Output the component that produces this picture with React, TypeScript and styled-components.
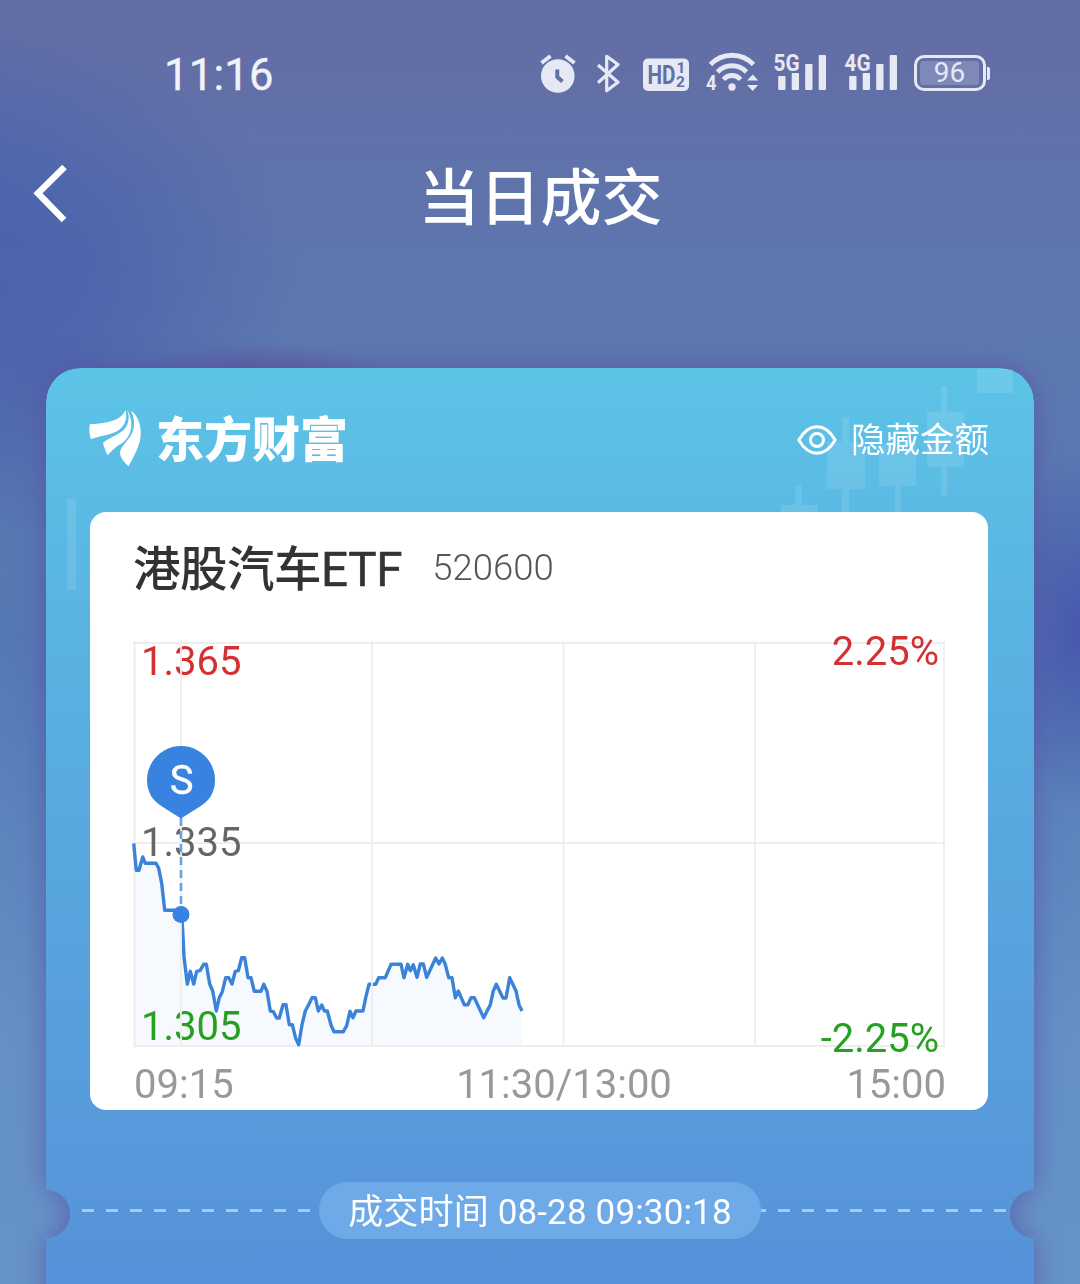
import styled, {createGlobalStyle} from "styled-components";

const GlobalStyle = createGlobalStyle`
    * {
        box-sizing: border-box;
    }

    body {
        margin: 0;
        font-family: Roboto, "Noto Sans CJK SC", sans-serif;
        color: #fff;
    }
`

const pricePoints = "133.7,843.3 136.3,870.3 139,870.3 142.7,857 145.3,863.3 156,863.3 158.7,868.3 161.7,883.3 164.7,910.3 175,910.3 181,914.3 182.3,923 184,956.7 187.3,984 190.3,971.3 193.7,984 196.7,971.3 200,970.7 203.7,964.3 206.3,964.3 209.7,984 212.7,991 216.3,1011 219.3,997.7 222.3,991.7 225.7,977.7 228.7,977.7 232,984 235.3,971.3 238.3,970.7 241.7,957.7 244.7,957.7 248,977.7 251,977.7 254.3,991.3 261,991.3 263.7,984.3 267,991.3 270.3,1011 273.3,1011.7 276.7,1018 279.3,1018 283,1004.7 286,1004.7 289.3,1024.7 292.3,1024.7 295.7,1038.3 298.7,1044.7 302,1024.7 305.3,1011 309,1004 312,997.7 315.3,997.7 318.3,1011 321.7,1005 324.5,1011 327.3,1011 331,1025 334,1031.7 343.3,1031.7 346.7,1025.7 350,1011.3 353,1017.7 356,1011 363,1011 365.7,997.7 369,984.3 375.7,984.3 378.7,977.7 385.3,977.7 391,964.3 401,964.3 404,977.7 407.7,964.3 410.3,970.7 413.3,964.7 417,977.3 420.3,964 423.3,964 426.7,977.3 435.7,958 439,964 442.3,958 445.3,964.3 448.7,977.7 452,977.7 455.3,997.7 458.3,991 464.3,1004.7 468,1004.7 471,997.7 474.3,997.7 483.7,1017.7 490.3,1004.7 493.3,991 496.3,984.3 503,998 506,998 509.7,977.7 516,991 519,1004.7 522,1011";

const gridColumns = [181, 372, 563.5, 755, 944];
const gridRows = [643, 843, 1046];

const AlarmIcon = () => (
    <svg width="38" height="40" viewBox="0 0 38 40">
        <circle cx="17.800" cy="22" r="16.800" fill="#e6e9f3"/>
        <path d="M1.500 9L10.500 2M25.500 2L34.500 9" stroke="#e6e9f3" strokeWidth="4"/>
        <path d="M17.300 15.500v7.500l5.200 4.500" fill="none" stroke="#6270a8" strokeWidth="4"/>
    </svg>
)

const BluetoothIcon = () => (
    <svg width="24" height="40" viewBox="0 0 24 40">
        <path d="M2 11L22 28.300 10.700 36.700V2.300L22 10.500 2 28.700" fill="none" stroke="#e6e9f3" strokeWidth="3.200" strokeLinejoin="round"/>
    </svg>
)

const HdIcon = () => (
    <svg width="46" height="34" viewBox="0 0 46 34">
        <rect y="1.500" width="46" height="32.500" rx="5" fill="#e6e9f3"/>
        <g fill="#6270a8" fontFamily="Roboto" fontWeight="700">
            <text x="4.500" y="26.800" fontSize="25" textLength="28" lengthAdjust="spacingAndGlyphs">HD</text>
            <text x="33.500" y="16.300" fontSize="15.500">1</text>
            <text x="33" y="29.600" fontSize="15.500">2</text>
        </g>
    </svg>
)

const WifiIcon = () => (
    <WideIcon width="54" height="40" viewBox="0 0 54 40">
        <g fill="none" stroke="#e6e9f3" strokeWidth="4.800">
            <path d="M4.500 10.500A29.600 29.600 0 0 1 47.500 10.500"/>
            <path d="M11.500 18A20 20 0 0 1 40.500 18"/>
            <path d="M17.500 25.500A11 11 0 0 1 34.500 25.500"/>
        </g>
        <circle cx="26" cy="33" r="3.700" fill="#e6e9f3"/>
        <path d="M41 26.500L46.700 20.500 52.300 26.500ZM41 31L46.700 37 52.300 31Z" fill="#e6e9f3"/>
        <text x="0" y="36" fontFamily="Roboto" fontWeight="700" fontSize="20.500" textLength="10.500" lengthAdjust="spacingAndGlyphs" fill="#e6e9f3">4</text>
    </WideIcon>
)

const SignalIcon = (props: { network: string }) => (
    <WideIcon width="53" height="40" viewBox="0 0 53 40">
        <text x="-0.500" y="17" fontFamily="Roboto" fontWeight="700" fontSize="24" textLength="26" lengthAdjust="spacingAndGlyphs" fill="#e6e9f3">{props.network}</text>
        <g fill="#e6e9f3">
            <rect x="4.200" y="22" width="7.300" height="14" rx="1"/>
            <rect x="17.700" y="19" width="7.300" height="17" rx="1"/>
            <rect x="31.200" y="10" width="7.300" height="26" rx="1"/>
            <rect x="44.700" y="1" width="7.300" height="35" rx="1"/>
        </g>
    </WideIcon>
)

const BackIcon = () => (
    <svg width="36" height="60" viewBox="0 0 36 60">
        <path d="M32.500 4L6 30.300 32 57" fill="none" stroke="#fff" strokeWidth="6.500"/>
    </svg>
)

const BrandIcon = () => (
    <svg width="54" height="58" viewBox="27 45 162 174">
        <g fill="#fff">
            <path d="M137 47C125 78 85 88 30 90 26 105 28 120 33 136 60 125 95 123 117 108 138 92 141 70 137 47Z"/>
            <path d="M142 47C154 85 138 108 110 122 92 132 78 138 69 146 72 160 77 172 83 184 98 168 105 160 125 148 158 125 162 85 142 47Z"/>
            <path d="M153 50C172 90 160 118 140 142 126 158 120 168 120 180 124 196 134 206 145 217 160 190 180 155 182 125 184 95 175 65 153 50Z"/>
        </g>
    </svg>
)

const EyeIcon = () => (
    <svg width="40" height="32" viewBox="0 0 40 32">
        <g fill="none" stroke="#fff" strokeWidth="3">
            <path d="M1.800 16C7 7 13 2.800 20 2.800S33 7 38.200 16C33 25 27 29.200 20 29.200S7 25 1.800 16Z" strokeLinejoin="round"/>
            <circle cx="20" cy="16" r="6.500"/>
        </g>
    </svg>
)

// faint candlesticks behind the card content
const Candles = () => (
    <CandleLayer viewBox="46 368 988 240">
        <rect x="977" y="369" width="36" height="24"/>
        <path d="M941 386h6v26h17v55h-17v29h-6v-29h-14v-55h14Z"/>
        <path d="M879 443h37v43h-15v30h-6v-30h-16Z"/>
        <path d="M842 418h7v24h16v47h-16v27h-7v-27h-15v-47h15Z"/>
        <path d="M795 485h7v20h16v11h-37v-11h14Z"/>
        <rect x="67" y="499" width="9" height="91"/>
    </CandleLayer>
)

const PriceChart = () => (
    <ChartSvg viewBox="90 620 898 490">
        <polygon points={`133.7,1046 ${pricePoints} 522,1046`} fill="#f6fafe"/>
        <g stroke="#eee" strokeWidth="2">
            <line x1="134.500" x2="134.500" y1="641" y2="1047"/>
            {gridRows.map(y => <line key={y} x1="134" x2="945" y1={y} y2={y}/>)}
        </g>
        <g fontSize="40">
            <text x="141" y="675" fill="#d33131">1.365</text>
            <text x="141" y="855.500" fill="#666">1.335</text>
            <text x="141" y="1040" fill="#25a01f">1.305</text>
            <text x="939" y="665" fill="#d33131" textAnchor="end">2.25%</text>
            <text x="939" y="1052" fill="#25a01f" textAnchor="end">-2.25%</text>
        </g>
        <polyline points={pricePoints} fill="none" stroke="#3b83d9" strokeWidth="3.400" strokeLinejoin="round"/>
        <g stroke="#eee" strokeWidth="1.800">
            {gridColumns.map(x => <line key={x} x1={x} x2={x} y1="641" y2="1047"/>)}
        </g>
        <line x1="181" x2="181" y1="818" y2="908" stroke="#6aa1e4" strokeWidth="2.600" strokeDasharray="8 5"/>
        <circle cx="181" cy="914.500" r="8.500" fill="#3883e0"/>
        <path d="M151 796A34 34 0 1 1 211 796Q207 802 200 806.500L181 818.500 162 806.500Q155 802 151 796Z" fill="#3883e0"/>
        <text x="181.500" y="794" fontSize="40" stroke="#fff" strokeWidth="0.400" textAnchor="middle" fill="#fff">S</text>
        <g fontSize="40" fill="#999">
            <text x="134" y="1098">09:15</text>
            <text x="564" y="1098" textAnchor="middle">11:30/13:00</text>
            <text x="946" y="1098" textAnchor="end">15:00</text>
        </g>
    </ChartSvg>
)

const App = () => {
    return (
        <Screen>
            <GlobalStyle/>
            <StatusBar>
                <Clock>11:16</Clock>
                <StatusIcons>
                    <StatusSlot><AlarmIcon/></StatusSlot>
                    <StatusSlot space={18}><BluetoothIcon/></StatusSlot>
                    <StatusSlot space={23}><HdIcon/></StatusSlot>
                    <StatusSlot space={17}><WifiIcon/></StatusSlot>
                    <StatusSlot space={13.5}><SignalIcon network="5G"/></StatusSlot>
                    <StatusSlot space={18}><SignalIcon network="4G"/></StatusSlot>
                    <StatusSlot space={16.5}><Battery><BatteryLevel>96</BatteryLevel></Battery></StatusSlot>
                </StatusIcons>
            </StatusBar>

            <Header>
                <BackButton aria-label="返回"><BackIcon/></BackButton>
                <Title>当日成交</Title>
            </Header>

            <Card>
                <Candles/>
                <CardHeader>
                    <Brand>
                        <BrandIcon/>
                        <BrandName>东方财富</BrandName>
                    </Brand>
                    <HideAmount>
                        <EyeIcon/>
                        隐藏金额
                    </HideAmount>
                </CardHeader>

                <Panel>
                    <StockRow>
                        <StockName>港股汽车<StockSuffix>ETF</StockSuffix></StockName>
                        <StockCode>520600</StockCode>
                    </StockRow>
                    <PriceChart/>
                </Panel>

                <TimeRow>
                    <Dashes width={237}/>
                    <TimeBadge>成交时间 08-28 09:30:18</TimeBadge>
                    <Dashes width={246} shift={7}/>
                </TimeRow>
            </Card>
        </Screen>
    )
}

export default App;

const Screen = styled.div`
    width: 1080px;
    height: 1284px;
    overflow: hidden;
    background:
        radial-gradient(ellipse 90px 180px at 1080px 630px, #4858ad 0%, rgba(72, 88, 173, 0) 100%),
        radial-gradient(ellipse 140px 46px at 265px 388px, rgba(92, 75, 146, 0.75) 0%, rgba(92, 75, 146, 0) 100%),
        radial-gradient(ellipse 360px 270px at -60px 280px, #4a61ad 0%, rgba(74, 97, 173, 0.75) 45%, rgba(74, 97, 173, 0) 100%),
        linear-gradient(180deg, #626da3 0%, #6270a8 8%, #5f74ac 17%, #5d79b0 27%, #5478b4 50%, #6490c6 80%, #6594c8 100%);
`

const StatusBar = styled.div`
    height: 148px;
    padding: 0 94px 0 164px;
    display: flex;
    justify-content: space-between;
    align-items: center;
`

const Clock = styled.span`
    margin-top: 3px;
    font-weight: 400;
    font-size: 43.500px;
    line-height: 60px;
    letter-spacing: 0.300px;
    -webkit-text-stroke: 0.400px #f1f3f9;
    color: #f1f3f9;
`

const StatusIcons = styled.div`
    display: flex;
    align-items: center;
`

const StatusSlot = styled.span<{ space?: number }>`
    display: flex;
    margin-left: ${props => props.space || 0}px;
`

const WideIcon = styled.svg`
    overflow: visible;
`

const Battery = styled.div`
    width: 72px;
    height: 36px;
    margin-top: -2px;
    padding: 3px 4px 3px 3px;
    border: 3px solid #e6e9f3;
    border-radius: 10px;
    position: relative;

    &::after {
        content: "";
        width: 3px;
        height: 13px;
        background-color: #e6e9f3;
        border-radius: 0 2px 2px 0;
        position: absolute;
        top: 9px;
        right: -7px;
    }
`

const BatteryLevel = styled.div`
    height: 24px;
    display: flex;
    justify-content: center;
    align-items: center;
    font-weight: 400;
    font-size: 28px;
    line-height: 24px;
    color: #e6e9f3;
    background-color: #7d89b8;
    border-radius: 3px;
`

const Header = styled.header`
    height: 220px;
    padding-top: 3px;
    position: relative;
    text-align: center;
`

const BackButton = styled.button`
    padding: 0;
    border: none;
    background: none;
    position: absolute;
    top: 15px;
    left: 32px;
`

const Title = styled.h1`
    margin: 0;
    padding-left: 1px;
    font-weight: 500;
    font-size: 61px;
    line-height: 96px;
`

const Card = styled.main`
    height: 940px;
    margin: 0 46px;
    padding: 0 46px 0 44px;
    position: relative;
    filter: drop-shadow(0 0 14px rgba(88, 70, 158, 0.65));

    &::before {
        content: "";
        position: absolute;
        inset: 0;
        border-radius: 34px 34px 0 0;
        background: linear-gradient(180deg, #5cc4e7 0%, #5bb9e4 17%, #58a8df 50%, #5798da 85%, #558fd8 100%);
        mask:
            radial-gradient(circle at 0 846px, transparent 23.5px, #000 24.5px) left / 50% 100% no-repeat,
            radial-gradient(circle at 100% 846px, transparent 23.5px, #000 24.5px) right / 50% 100% no-repeat;
    }
`

const CandleLayer = styled.svg`
    width: 988px;
    height: 240px;
    fill: rgba(255, 255, 255, 0.1);
    position: absolute;
    top: 0;
    left: 0;
`

const CardHeader = styled.div`
    height: 144px;
    display: flex;
    justify-content: space-between;
    align-items: center;
    position: relative;
`

const Brand = styled.div`
    display: flex;
    align-items: center;
    gap: 13px;
    margin: -5px 0 0 -1px;
`

const BrandName = styled.span`
    margin-top: -3px;
    font-family: "Noto Sans CJK SC", sans-serif;
    font-weight: 900;
    font-size: 48px;
    line-height: 60px;
`

const HideAmount = styled.div`
    display: flex;
    align-items: center;
    gap: 14px;
    margin-right: -1px;
    font-weight: 400;
    font-size: 34.500px;
    line-height: 50px;
`

const Panel = styled.section`
    height: 598px;
    background-color: #fff;
    border-radius: 16px;
    position: relative;
`

const StockRow = styled.div`
    height: 108px;
    padding: 5px 0 0 43px;
    display: flex;
    align-items: center;
    gap: 30px;
`

const StockName = styled.span`
    margin-top: 3px;
    font-weight: 500;
    font-size: 47.500px;
    line-height: 100px;
    letter-spacing: -0.500px;
    color: #333;
`

const StockSuffix = styled.span`
    font-weight: 400;
    letter-spacing: -0.300px;
    -webkit-text-stroke: 0.500px #333;
`

const StockCode = styled.span`
    margin-top: -2px;
    font-weight: 300;
    font-size: 36.500px;
    line-height: 100px;
    color: #555;
`

const ChartSvg = styled.svg`
    display: block;
    width: 898px;
    height: 490px;
    font-family: Roboto, sans-serif;
`

const TimeRow = styled.div`
    margin: 72px -20px 0 -8px;
    display: flex;
    align-items: center;
    position: relative;
`

const Dashes = styled.span<{ width: number, shift?: number }>`
    width: ${props => props.width}px;
    height: 3px;
    background-image: linear-gradient(90deg, #a8cbf0 12px, transparent 12px);
    background-size: 24px 3px;
    background-position-x: ${props => -(props.shift || 0)}px;
`

const TimeBadge = styled.span`
    width: 442px;
    height: 57px;
    padding-top: 2px;
    border-radius: 29px;
    background-color: #6eaae7;
    font-size: 35px;
    line-height: 57px;
    letter-spacing: 0.150px;
    text-align: center;
    white-space: nowrap;
`
